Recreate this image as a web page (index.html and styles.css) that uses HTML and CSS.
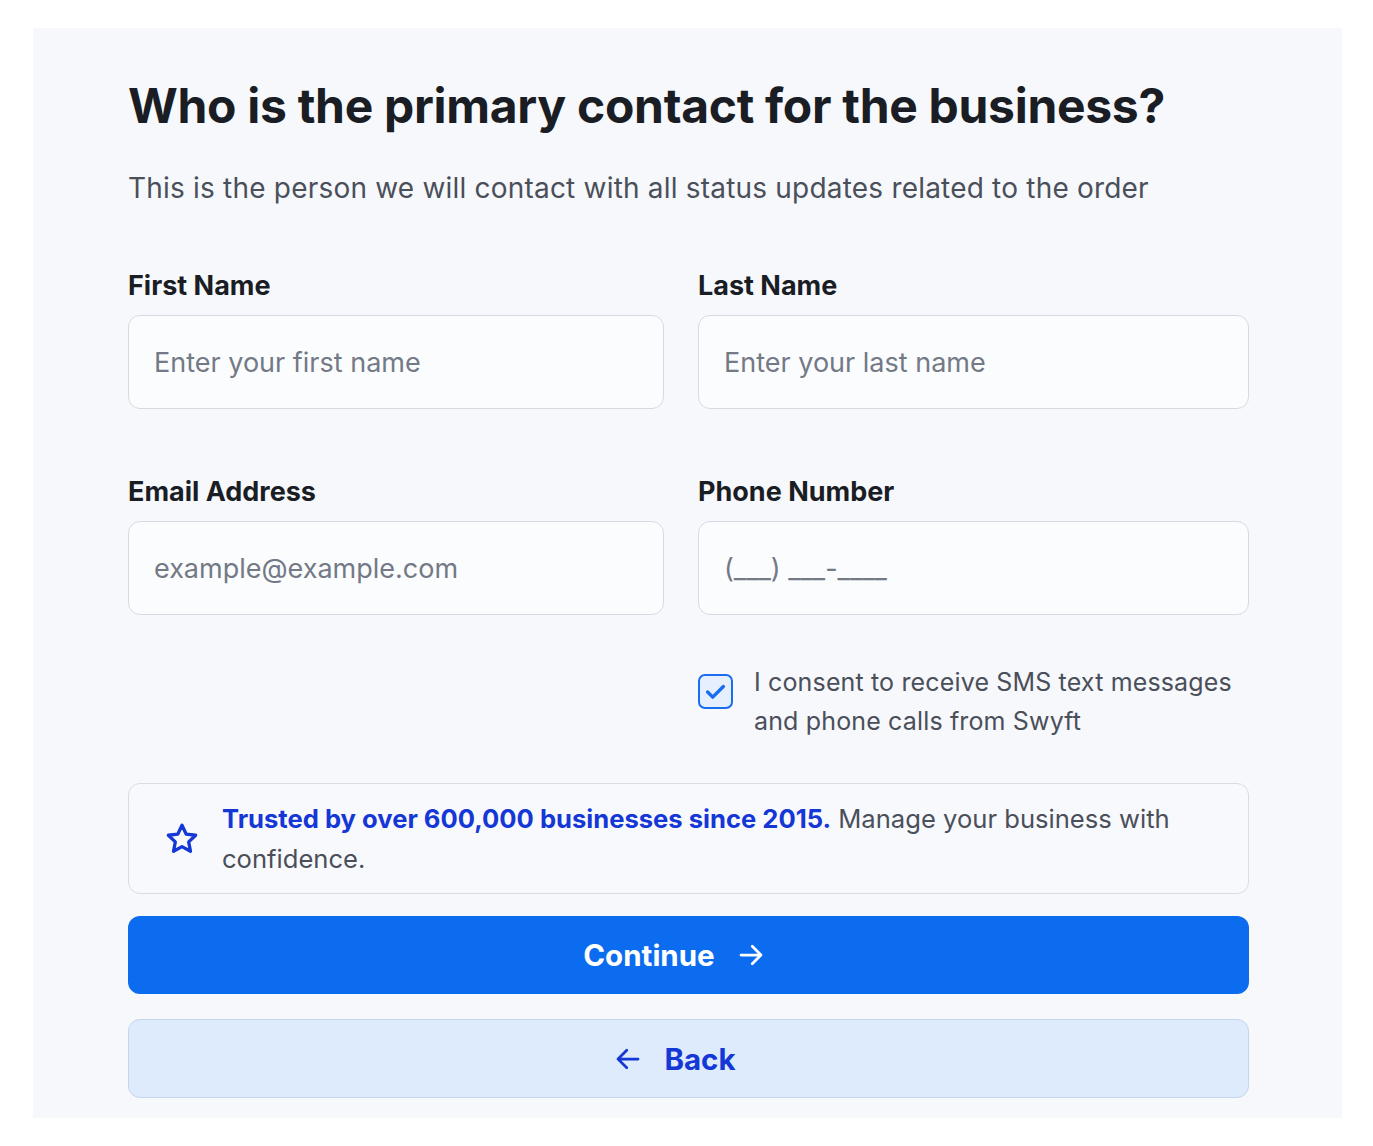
FILE: index.html
```html
<!DOCTYPE html>
<html lang="en">
<head>
<meta charset="utf-8">
<title>Primary contact</title>
<link rel="stylesheet" href="styles.css">
</head>
<body>
<main class="panel">
  <h1 class="title">Who is the primary contact for the business?</h1>
  <p class="subtitle">This is the person we will contact with all status updates related to the order</p>

  <div class="fields">
    <div class="field">
      <label class="label">First Name</label>
      <div class="input"><span class="ph">Enter your first name</span></div>
    </div>
    <div class="field">
      <label class="label">Last Name</label>
      <div class="input"><span class="ph">Enter your last name</span></div>
    </div>
    <div class="field">
      <label class="label">Email Address</label>
      <div class="input"><span class="ph">example@example.com</span></div>
    </div>
    <div class="field">
      <label class="label">Phone Number</label>
      <div class="input"><span class="ph">(___) ___-____</span></div>
    </div>
    <div class="consent-cell">
      <div class="consent">
        <span class="check">
          <svg viewBox="0 0 24 24" width="27" height="27"><path d="M5 12.5l4.5 4.5L19 7.5" fill="none" stroke="#1a6cf0" stroke-width="3" stroke-linecap="round" stroke-linejoin="round"/></svg>
        </span>
        <span class="consent-text">I consent to receive SMS text messages and phone calls from Swyft</span>
      </div>
    </div>
  </div>

  <div class="trust">
    <svg class="star" viewBox="0 0 24 24" width="36" height="36"><path d="M12 2.8l2.75 5.9 6.35.8-4.65 4.4 1.2 6.3L12 17.1l-5.65 3.1 1.2-6.3L2.9 9.5l6.35-.8z" fill="none" stroke="#1437d6" stroke-width="2.2" stroke-linejoin="round"/></svg>
    <p class="trust-text"><strong>Trusted by over 600,000 businesses since 2015.</strong> Manage your business with confidence.</p>
  </div>

  <button class="btn btn-primary">Continue
    <svg viewBox="0 0 24 24" width="30" height="30"><path d="M4 12h15.5M13 5l7 7-7 7" fill="none" stroke="#fff" stroke-width="2.2" stroke-linecap="round" stroke-linejoin="round"/></svg>
  </button>
  <button class="btn btn-back">
    <svg viewBox="0 0 24 24" width="30" height="30"><path d="M20 12H4.5M11 5l-7 7 7 7" fill="none" stroke="#1437d6" stroke-width="2.2" stroke-linecap="round" stroke-linejoin="round"/></svg>
    Back
  </button>
</main>
</body>
</html>
```

FILE: styles.css
```css
* { box-sizing: border-box; }
html, body { margin: 0; padding: 0; background: #ffffff; }
body {
  font-family: Inter, "Noto Sans", "Liberation Sans", sans-serif;
  color: #1a1d24;
}
.panel {
  margin: 28px 0 0 33px;
  width: 1309px;
  height: 1090px;
  background: #f6f8fc;
  padding: 49px 93px 0 95px;
}
.title {
  margin: 0;
  font-size: 48px;
  line-height: 58px;
  font-weight: 700;
  letter-spacing: -0.3px;
  color: #1a1d24;
}
.subtitle {
  margin: 35px 0 0;
  font-size: 28px;
  line-height: 36px;
  letter-spacing: 0.2px;
  color: #4a4f5a;
}
.fields {
  margin-top: 63px;
  display: grid;
  grid-template-columns: 536px 551px;
  column-gap: 34px;
  row-gap: 66px;
}
.field { display: flex; flex-direction: column; }
.label {
  font-size: 27px;
  line-height: 34px;
  font-weight: 700;
  color: #1a1d24;
  margin-bottom: 12px;
}
.input {
  height: 94px;
  border: 1.5px solid #d5dae3;
  border-radius: 12px;
  background: #fbfcfe;
  display: flex;
  align-items: center;
  padding: 0 25px;
}
.ph { font-size: 27px; color: #737985; }
.consent-cell { grid-column: 2; margin-top: -18px; }
.consent { display: flex; gap: 21px; align-items: flex-start; }
.check {
  flex: none;
  width: 35px;
  height: 35px;
  margin-top: 11px;
  border: 2.5px solid #1a6cf0;
  border-radius: 7px;
  background: #e6effd;
  display: flex;
  align-items: center;
  justify-content: center;
}
.consent-text {
  font-size: 25px;
  line-height: 39px;
  letter-spacing: 0.15px;
  color: #4a4f5a;
}
.trust {
  margin-top: 42px;
  height: 111px;
  border: 1.5px solid #d8dde5;
  border-radius: 12px;
  background: #f8f9fc;
  display: flex;
  align-items: center;
  padding: 0 40px 0 35px;
  gap: 22px;
}
.star { flex: none; }
.trust-text {
  margin: 0;
  font-size: 25.6px;
  line-height: 40px;
  color: #4a4f5a;
}
.trust-text strong { color: #1437d6; font-weight: 700; }
.btn {
  display: flex;
  width: 100%;
  align-items: center;
  justify-content: center;
  gap: 21px;
  padding: 0 28px 0 0;
  font-family: inherit;
  font-size: 29.5px;
  font-weight: 700;
  border-radius: 12px;
  cursor: pointer;
}
.btn-primary {
  margin-top: 22px;
  height: 78px;
  background: #0b6cf0;
  color: #ffffff;
  border: none;
}
.btn-back {
  margin-top: 25px;
  height: 79px;
  background: #ddebfc;
  color: #1437d6;
  border: 1.5px solid #c5d5ee;
}
```
